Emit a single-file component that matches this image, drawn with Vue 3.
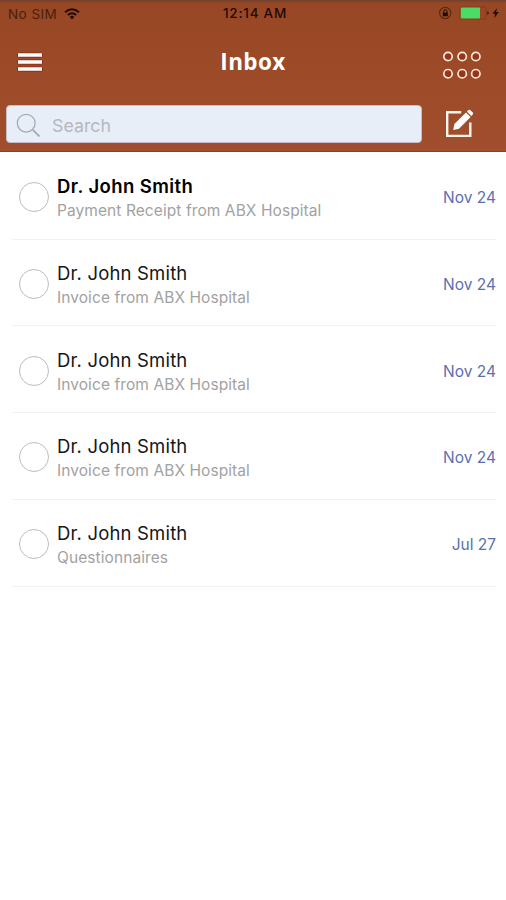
<script setup>
const messages = [
  { id: 1, sender: 'Dr. John Smith', subject: 'Payment Receipt from ABX Hospital', date: 'Nov 24', unread: true },
  { id: 2, sender: 'Dr. John Smith', subject: 'Invoice from ABX Hospital', date: 'Nov 24' },
  { id: 3, sender: 'Dr. John Smith', subject: 'Invoice from ABX Hospital', date: 'Nov 24' },
  { id: 4, sender: 'Dr. John Smith', subject: 'Invoice from ABX Hospital', date: 'Nov 24' },
  { id: 5, sender: 'Dr. John Smith', subject: 'Questionnaires', date: 'Jul 27' },
]
</script>

<template>
  <div class="screen">
    <header class="header">
      <div class="status">
        <div class="carrier">
          <span>No SIM</span>
          <svg width="16" height="12" viewBox="0 0 16 12" fill="none" stroke="#210b04">
            <path d="M1 4.2Q8 -1.6 15 4.2" stroke-width="2" />
            <path d="M3.8 7Q8 3.4 12.2 7" stroke-width="1.9" />
            <path d="M5.7 8.7Q8 6.9 10.3 8.7L8 11.4Z" fill="#210b04" stroke="none" />
          </svg>
        </div>
        <span class="clock">12:14 AM</span>
        <div class="power">
          <svg width="64" height="14" viewBox="0 0 64 14">
            <circle cx="7.2" cy="7" r="5.6" fill="none" stroke="#5b2a14" stroke-width="1.2" />
            <rect x="4.8" y="6.5" width="5" height="3.7" fill="#210b04" />
            <path d="M5.6 7V5.4a1.7 1.7 0 0 1 3.4 0V7" fill="none" stroke="#210b04" />
            <rect x="22" y="1" width="26" height="12" rx="2" fill="none" stroke="#7a3b20" stroke-width=".8" />
            <rect x="22.8" y="1.6" width="19.2" height="11" rx=".8" fill="#4bdc66" />
            <path d="M49.3 5q3 2 0 4.2z" fill="#35150a" />
            <path d="M59 2 54.4 7.7h2.7l-.8 4.3 4.6-6h-2.8z" fill="#210b04" />
          </svg>
        </div>
      </div>
      <nav class="nav">
        <svg class="menu" width="26" height="22" viewBox="0 0 26 22">
          <g stroke="#8c1d0c" stroke-width="5" stroke-linecap="round" opacity=".75">
            <path d="M2.5 4h21M2.5 11h21M2.5 18h21" />
          </g>
          <g stroke="#fff" stroke-width="3.4">
            <path d="M1 4h24M1 11h24M1 18h24" />
          </g>
        </svg>
        <h1>Inbox</h1>
        <svg class="grid" width="40" height="30" viewBox="0 0 40 30" fill="#943617" stroke="#fce6da" stroke-width="1.7">
          <circle cx="6" cy="6.5" r="4.2" /><circle cx="20.2" cy="6.5" r="4.2" /><circle cx="33.8" cy="6.5" r="4.2" />
          <circle cx="6" cy="23.7" r="4.2" /><circle cx="20.2" cy="23.7" r="4.2" /><circle cx="33.8" cy="23.7" r="4.2" />
        </svg>
      </nav>
      <div class="tools">
        <div class="search">
          <svg width="26" height="26" viewBox="0 0 26 26" fill="none" stroke="#a7abb2">
            <circle cx="10.2" cy="10.2" r="8.9" stroke-width="1.3" />
            <path d="m16.8 16.8 6.7 6.7" stroke-width="1.8" />
          </svg>
          <span>Search</span>
        </div>
        <svg class="compose" width="30" height="30" viewBox="0 0 30 30">
          <path d="M17.2 4.2H3.2v23.7h23.1V14.5" fill="none" stroke="#fff4ec" stroke-width="2.4" />
          <path d="m9.2 21.9 1.2-5.8L22 4.5l4.6 4.6L15 20.7z" fill="#fff" />
          <path d="m22.9 3.6 1.3-1.3q1.2-1 2.4.1l1.9 1.9q1.1 1.2.1 2.4L27.4 8z" fill="#fff" />
        </svg>
      </div>
    </header>

    <main class="list">
      <article v-for="m in messages" :key="m.id" class="row" :class="{ unread: m.unread }">
        <span class="check"></span>
        <div class="body">
          <div class="sender">{{ m.sender }}</div>
          <div class="subject">{{ m.subject }}</div>
        </div>
        <time>{{ m.date }}</time>
      </article>
    </main>
  </div>
</template>

<style>
body {
  margin: 0;
  background: #fff;
}
</style>

<style scoped>
.screen {
  width: 506px;
  height: 900px;
  overflow: hidden;
  background: #fff;
  font-family: Inter, "Liberation Sans", sans-serif;
}
.header {
  box-sizing: border-box;
  height: 152px;
  background: linear-gradient(#77432f 0, #77432f 1px, #984724 3px, #9d4b29 60%, #a04e2d 100%);
  border-bottom: 1px solid #953f16;
}
.status {
  display: grid;
  grid-template-columns: 1fr auto 1fr;
  align-items: center;
  height: 26px;
  padding: 0 4px 0 8px;
  color: #210b04;
  font-size: 13px;
}
.carrier {
  display: flex;
  align-items: center;
  gap: 7px;
  padding-top: 1px;
  color: #4a2010;
  font-size: 13.5px;
  letter-spacing: 0.45px;
}
.clock {
  font-size: 13.5px;
  font-weight: 500;
  letter-spacing: 0.75px;
}
.power {
  display: flex;
  justify-content: flex-end;
}
.nav {
  display: grid;
  grid-template-columns: 1fr auto 1fr;
  align-items: center;
  height: 79px;
  padding: 0 24px 0 17px;
  box-sizing: border-box;
}
.nav h1 {
  margin: 0 0 8px 7px;
  color: #fff;
  font: 700 22.5px/30px "Open Sans", sans-serif;
  letter-spacing: 0.4px;
}
.menu {
  margin-bottom: 7px;
}
.grid {
  justify-self: end;
  margin-bottom: 1px;
}
.tools {
  display: flex;
  align-items: center;
  gap: 22px;
  padding-left: 6px;
}
.search {
  box-sizing: border-box;
  display: flex;
  align-items: center;
  gap: 10px;
  width: 416px;
  height: 38px;
  padding: 3px 9px 0;
  border: 1px solid #c3bfc9;
  border-radius: 4px;
  background: #e8eef8;
  color: #b5b8be;
  font-size: 17.8px;
}
.compose {
  margin-bottom: 3px;
}
.row {
  box-sizing: border-box;
  display: flex;
  align-items: center;
  height: 86.8px;
  margin: 0 10px 0 12px;
  padding: 3px 0 0 7px;
  border-bottom: 1px solid #f1f1f1;
}
.row:first-child {
  height: 87.5px;
}
.check {
  box-sizing: border-box;
  width: 30px;
  height: 30px;
  border: 1.4px solid #bdbdbd;
  border-radius: 50%;
}
.body {
  flex: 1;
  margin-left: 8px;
  padding-top: 3px;
}
.sender {
  color: #161616;
  font-size: 18.5px;
  letter-spacing: 0.18px;
  line-height: 25px;
}
.unread .sender {
  color: #000;
  font-weight: 600;
  letter-spacing: 0.42px;
}
.subject {
  color: #a2a2a2;
  font-size: 15.5px;
  letter-spacing: 0.08px;
  line-height: 24px;
}
time {
  padding-top: 1px;
  color: #5b70ae;
  font-size: 15.5px;
}
</style>
